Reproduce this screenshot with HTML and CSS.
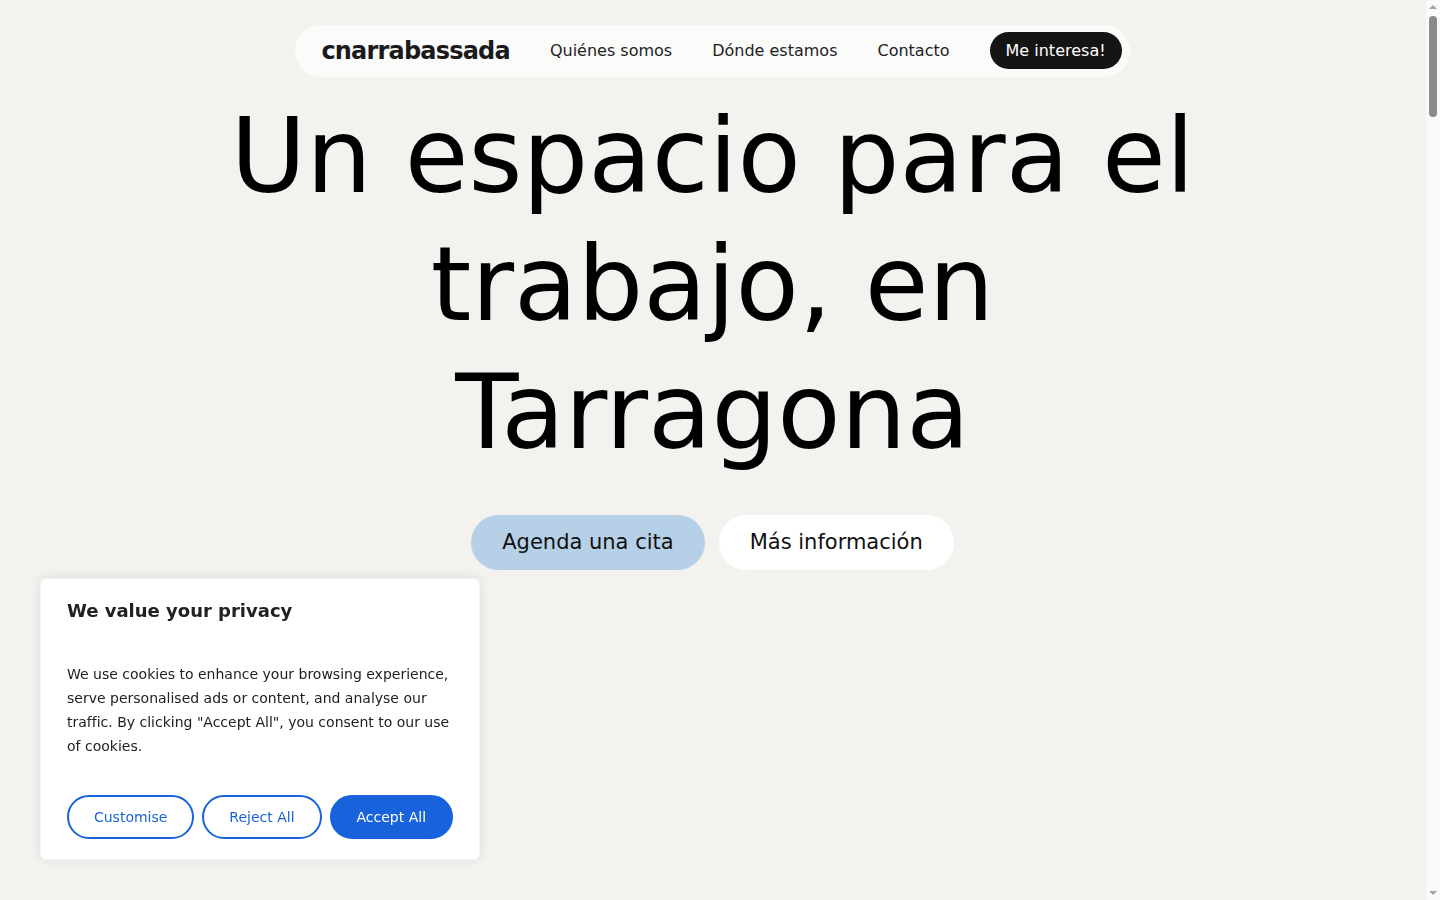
FILE: index.html
```html
<!DOCTYPE html>
<html lang="es">
<head>
    <meta charset="UTF-8">
    <meta name="viewport" content="width=device-width, initial-scale=1.0">
    <title>cnarrabassada - Un espacio para el trabajo, en Tarragona</title>
    <link rel="stylesheet" href="styles.css">
</head>
<body>

    <header class="site-header">
        <nav class="nav-pill">
            <a href="#" class="logo">cnarrabassada</a>
            <a href="#quienes" class="nav-link">Quiénes somos</a>
            <a href="#donde" class="nav-link">Dónde estamos</a>
            <a href="#contacto" class="nav-link">Contacto</a>
            <a href="#contacto" class="nav-cta">Me interesa!</a>
        </nav>
    </header>

    <main>
        <section class="hero">
            <h1>Un espacio para el trabajo, en Tarragona</h1>
            <div class="hero-actions">
                <a href="#contacto" class="btn btn-primary">Agenda una cita</a>
                <a href="#quienes" class="btn btn-light">Más información</a>
            </div>
        </section>

        <section class="page-rest" id="quienes"></section>
    </main>

    <div class="cookie-box">
        <div class="cookie-bar">
            <p class="cookie-title">We value your privacy</p>
            <p class="cookie-text">We use cookies to enhance your browsing experience, serve personalised ads or content, and analyse our traffic. By clicking "Accept All", you consent to our use of cookies.</p>
            <div class="cookie-buttons">
                <button class="cookie-btn cookie-btn-outline">Customise</button>
                <button class="cookie-btn cookie-btn-outline">Reject All</button>
                <button class="cookie-btn cookie-btn-accept">Accept All</button>
            </div>
        </div>
    </div>

    <!-- window scrollbar -->
    <div class="scrollbar">
        <span class="scroll-arrow scroll-up"></span>
        <span class="scroll-thumb"></span>
        <span class="scroll-arrow scroll-down"></span>
    </div>

</body>
</html>
```

FILE: styles.css
```css
body {
    font-family: "DejaVu Sans", sans-serif;
    background-color: #f3f2ef;
    color: #1a1a1a;
    margin: 0 15px 0 0;
    padding: 0;
}
a {
    color: inherit;
    text-decoration: none;
}
.site-header {
    display: flex;
    justify-content: center;
    padding-top: 25px;
}
.nav-pill {
    display: flex;
    align-items: center;
    gap: 40px;
    background-color: #fbfbfa;
    padding: 7px 8px 8px 26px;
    border-radius: 30px;
}
.logo {
    font-size: 24px;
    font-weight: bold;
    letter-spacing: -0.8px;
    color: #1a1a1a;
}
.nav-link {
    font-size: 16px;
    color: #222;
}
.nav-cta {
    background-color: #141414;
    color: white;
    font-size: 16px;
    line-height: 21px;
    padding: 8px 16px;
    border-radius: 20px;
}
.hero {
    display: flex;
    flex-direction: column;
    align-items: center;
    padding-top: 15px;
}
.hero h1 {
    max-width: 1000px;
    margin: 0;
    font-size: 103.6px;
    font-weight: normal;
    line-height: 128px;
    text-align: center;
    color: #000;
}
.hero-actions {
    display: flex;
    gap: 14px;
    margin-top: 39px;
}
.btn {
    font-size: 21px;
    line-height: 25px;
    padding: 15px 31px;
    border-radius: 30px;
    color: #111;
}
.btn-primary {
    background-color: #b6d0e8;
}
.btn-light {
    background-color: white;
}
.page-rest {
    height: 6700px;
}
.cookie-box {
    position: fixed;
    left: 40px;
    bottom: 40px;
    width: 440px;
    box-sizing: border-box;
}
.cookie-bar {
    background-color: white;
    border: 1px solid #f4f4f4;
    border-radius: 6px;
    padding: 20px 26px;
    box-shadow: 0 -1px 10px 0 rgba(172, 171, 171, 0.3);
    color: #212121;
}
.cookie-title {
    margin: 0 0 39px 0;
    font-size: 18px;
    font-weight: bold;
    line-height: 24px;
}
.cookie-text {
    margin: 0;
    font-size: 14px;
    line-height: 24px;
}
.cookie-buttons {
    display: flex;
    gap: 8px;
    margin-top: 37px;
}
.cookie-btn {
    flex: auto;
    font-family: inherit;
    font-size: 14px;
    line-height: 24px;
    padding: 8px;
    border: 2px solid #1863dc;
    border-radius: 22px;
    cursor: pointer;
}
.cookie-btn-outline {
    background-color: transparent;
    color: #1863dc;
}
.cookie-btn-accept {
    background-color: #1863dc;
    color: white;
}
.cookie-btn:hover {
    opacity: 0.8;
}
.scrollbar {
    position: fixed;
    top: 0;
    right: 0;
    bottom: 0;
    width: 15px;
    background-color: #fafafa;
    border-left: 1px solid #f0f0f0;
    box-sizing: border-box;
}
.scroll-thumb {
    position: absolute;
    top: 16px;
    left: 3px;
    width: 8px;
    height: 101px;
    background-color: #8a8a8a;
    border-radius: 4px;
}
.scroll-arrow {
    position: absolute;
    left: 3px;
    width: 0;
    height: 0;
    border-left: 4px solid transparent;
    border-right: 4px solid transparent;
}
.scroll-up {
    top: 5px;
    border-bottom: 4px solid #a3a3a3;
}
.scroll-down {
    bottom: 5px;
    border-top: 4px solid #a3a3a3;
}
```
